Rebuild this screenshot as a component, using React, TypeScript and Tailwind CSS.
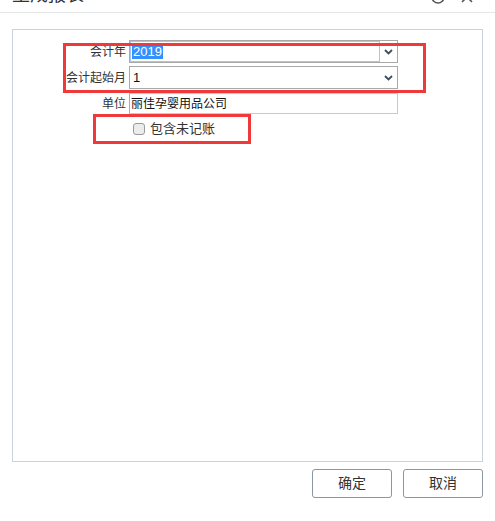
import React from 'react';

const Chevron = () => (
  <svg width="9" height="6" viewBox="0 0 9 6" className="block">
    <path d="M1 1 L4.5 4.5 L8 1" fill="none" stroke="#3f4d5c" strokeWidth="1.8" />
  </svg>
);

const App: React.FC = () => {
  const [checked, setChecked] = React.useState(false);

  return (
    <div
      className="relative w-[495px] h-[521px] bg-white overflow-hidden text-[#333]"
      style={{ fontFamily: '"Liberation Sans", "Noto Sans CJK SC", sans-serif' }}
    >
      {/* header, title cut off by the top of the window */}
      <div className="-mt-[27px] h-[40px] flex items-end justify-between border-b border-[#e4e6e8] pl-[12px] pr-[22px]">
        <div className="text-[18px] leading-[24px] pb-[5px] text-[#333]">生成报表</div>
        <div className="flex items-center gap-[16px] pb-[8px]">
          <svg width="14" height="14" viewBox="0 0 14 14">
            <circle cx="7" cy="7" r="6" fill="none" stroke="#555" strokeWidth="1.6" />
          </svg>
          <svg width="12" height="12" viewBox="0 0 12 12">
            <path d="M1 1 L11 11 M11 1 L1 11" stroke="#555" strokeWidth="1.6" />
          </svg>
        </div>
      </div>

      {/* content panel */}
      <div className="mx-[12px] mt-[16px] h-[433px] border border-[#c6d3de] pt-[10px]">
        <div className="flex items-center h-[23px]">
          <div className="w-[114px] text-right text-[12px] pr-[1px]">会计年</div>
          <div className="ml-[2px] w-[269px] h-[23px] flex border border-[#a9a9a9]">
            <div className="flex-1 flex items-center border border-[#a8c4f0] pl-[1px]">
              <span className="bg-[#3390ff] text-white text-[13px] leading-[15px] px-[1px]">2019</span>
            </div>
            <div className="w-[17px] flex items-center justify-center">
              <Chevron />
            </div>
          </div>
        </div>

        <div className="flex items-center h-[23px] mt-[3px]">
          <div className="w-[114px] text-right text-[12px] pr-[1px]">会计起始月</div>
          <div className="ml-[2px] w-[269px] h-[23px] flex items-center justify-between border border-[#a9a9a9] pl-[3px] pr-[4px]">
            <span className="text-[13px] text-[#111]">1</span>
            <Chevron />
          </div>
        </div>

        <div className="flex items-center h-[21px] mt-[4px]">
          <div className="w-[114px] text-right text-[12px] pr-[1px]">单位</div>
          <div className="ml-[2px] w-[269px] h-[21px] flex items-center border-t border-r border-b border-[#c9c9c9] border-l-[#aaa] border-l pl-[1px]">
            <span className="text-[12px] text-[#111]">丽佳孕婴用品公司</span>
          </div>
        </div>

        <label className="flex items-center mt-[8px] ml-[120px] h-[13px] gap-[5px] cursor-pointer">
          <input
            type="checkbox"
            checked={checked}
            onChange={() => setChecked(!checked)}
            className="appearance-none w-[12px] h-[12px] m-0 rounded-[3px] border border-[#9a9a9a] bg-[#ececec] checked:bg-[#3390ff]"
          />
          <span className="text-[13px] text-[#333]">包含未记账</span>
        </label>
      </div>

      {/* footer buttons */}
      <div className="flex justify-end gap-[11px] mt-[7px] pr-[12px]">
        <button className="w-[80px] h-[29px] border border-[#8a96a3] rounded-[3px] bg-white text-[14px] text-[#333]">
          确定
        </button>
        <button className="w-[80px] h-[29px] border border-[#8a96a3] rounded-[3px] bg-white text-[14px] text-[#333]">
          取消
        </button>
      </div>

      {/* red annotation boxes */}
      <div className="absolute left-[63px] top-[43px] w-[363px] h-[50px] border-[3px] border-[#f03a3a] pointer-events-none" />
      <div className="absolute left-[93px] top-[114px] w-[158px] h-[30px] border-[3px] border-[#f03a3a] pointer-events-none" />
    </div>
  );
};

export default App;
